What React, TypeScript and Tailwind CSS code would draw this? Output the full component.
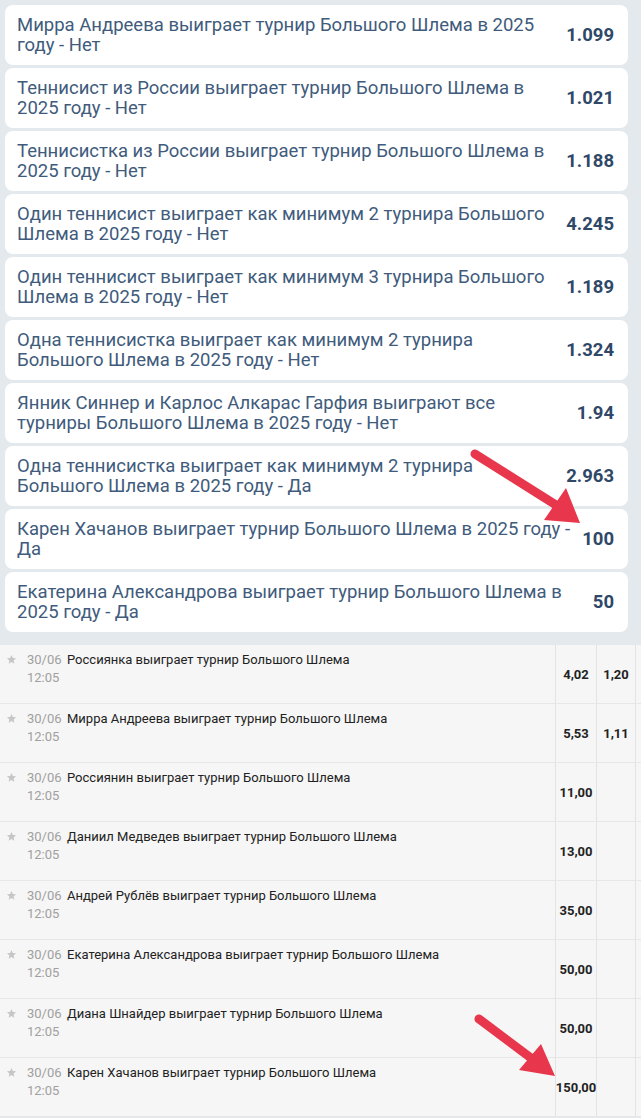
import React from "react";

const cards: [string, string][] = [
  ["Мирра Андреева выиграет турнир Большого Шлема в 2025 году - Нет", "1.099"],
  ["Теннисист из России выиграет турнир Большого Шлема в 2025 году - Нет", "1.021"],
  ["Теннисистка из России выиграет турнир Большого Шлема в 2025 году - Нет", "1.188"],
  ["Один теннисист выиграет как минимум 2 турнира Большого Шлема в 2025 году - Нет", "4.245"],
  ["Один теннисист выиграет как минимум 3 турнира Большого Шлема в 2025 году - Нет", "1.189"],
  ["Одна теннисистка выиграет как минимум 2 турнира Большого Шлема в 2025 году - Нет", "1.324"],
  ["Янник Синнер и Карлос Алкарас Гарфия выиграют все турниры Большого Шлема в 2025 году - Нет", "1.94"],
  ["Одна теннисистка выиграет как минимум 2 турнира Большого Шлема в 2025 году - Да", "2.963"],
  ["Карен Хачанов выиграет турнир Большого Шлема в 2025 году - Да", "100"],
  ["Екатерина Александрова выиграет турнир Большого Шлема в 2025 году - Да", "50"],
];

const rows: [string, string, string][] = [
  ["Россиянка выиграет турнир Большого Шлема", "4,02", "1,20"],
  ["Мирра Андреева выиграет турнир Большого Шлема", "5,53", "1,11"],
  ["Россиянин выиграет турнир Большого Шлема", "11,00", ""],
  ["Даниил Медведев выиграет турнир Большого Шлема", "13,00", ""],
  ["Андрей Рублёв выиграет турнир Большого Шлема", "35,00", ""],
  ["Екатерина Александрова выиграет турнир Большого Шлема", "50,00", ""],
  ["Диана Шнайдер выиграет турнир Большого Шлема", "50,00", ""],
  ["Карен Хачанов выиграет турнир Большого Шлема", "150,00", ""],
];

function Star() {
  return (
    <svg width="11" height="11" viewBox="0 0 24 24" className="shrink-0">
      <path
        d="M12 2l2.9 6.9 7.1.6-5.4 4.7 1.6 7L12 17.5 5.8 21.2l1.6-7L2 9.5l7.1-.6z"
        fill="#c6c6c6"
      />
    </svg>
  );
}

export default function App() {
  return (
    <div
      className="relative w-[641px] h-[1118px] overflow-hidden bg-[#e4e9ee]"
      style={{ fontFamily: "Roboto, 'Noto Sans', sans-serif" }}
    >
      <div className="flex flex-col gap-[3px] pt-[5px] pl-[5px] pr-[13px] h-[645px]">
        {cards.map(([t, o], i) => (
          <div
            key={i}
            className="h-[60px] shrink-0 rounded-[8px] bg-white flex items-center pl-[12px] pr-[14px]"
          >
            <div className="flex-1 min-w-0 text-[18.5px] leading-[20px] text-[#405b7c]">{t}</div>
            <div className="shrink-0 ml-[8px] text-right text-[18.5px] font-bold text-[#2f4868] pt-[2px]">{o}</div>
          </div>
        ))}
      </div>
      <div className="bg-[#f6f6f6]">
        {rows.map(([t, a, b], i) => (
          <div key={i} className="flex h-[59px] border-b border-[#e6e7e9]">
            <div className="flex-1 flex items-start pt-[6px] pl-[6px]">
              <div className="pt-[3px] w-[21px]">
                <Star />
              </div>
              <div className="text-[13px] leading-[18px] text-[#a0a0a0] w-[40px]">
                <div>30/06</div>
                <div>12:05</div>
              </div>
              <div className="text-[13px] leading-[18px] text-[#222]">{t}</div>
            </div>
            <div className="w-[41px] border-l border-[#e3e3e3] flex items-center justify-center pt-[2px] text-[13px] font-bold text-[#222] whitespace-nowrap">
              {a}
            </div>
            <div className="w-[39px] border-l border-[#e3e3e3] flex items-center justify-center pt-[2px] text-[13px] font-bold text-[#222]">
              {b}
            </div>
            <div className="w-[6px] border-l border-[#e3e3e3]" />
          </div>
        ))}
      </div>
      <svg
        className="absolute left-0 top-0 pointer-events-none"
        width="641"
        height="1118"
        viewBox="0 0 641 1118"
      >
        <line x1="475" y1="454" x2="556" y2="505" stroke="#e8374c" strokeWidth="9" strokeLinecap="round" />
        <polygon points="580,523 544,520 566,488" fill="#e8374c" />
        <line x1="479" y1="1019" x2="531" y2="1058" stroke="#e8374c" strokeWidth="9" strokeLinecap="round" />
        <polygon points="555,1076 519,1070 541,1044" fill="#e8374c" />
      </svg>
    </div>
  );
}
